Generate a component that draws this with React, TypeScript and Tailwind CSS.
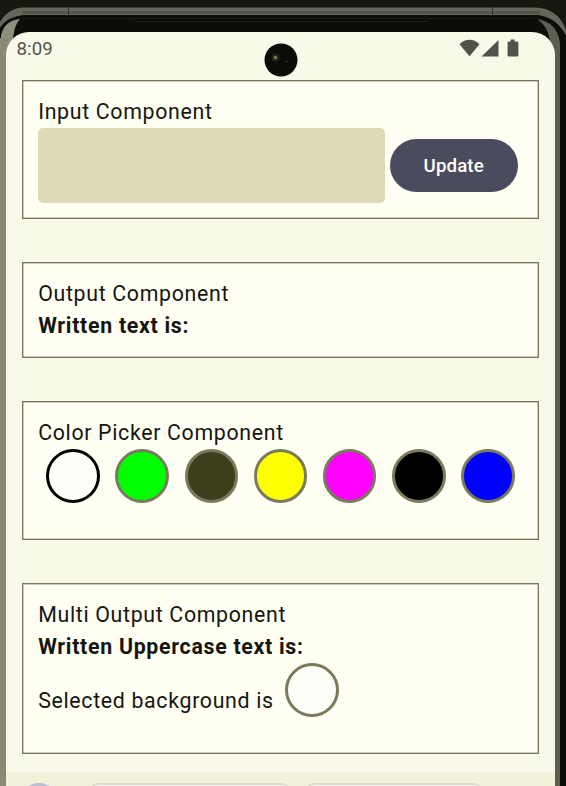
import { useState } from 'react';
import type { ReactNode } from 'react';
import clsx from 'clsx';

const COLORS = [
  { name: 'White', fill: 'bg-[#fffffa]' },
  { name: 'Green', fill: 'bg-[#00ff00]' },
  { name: 'Dark gray', fill: 'bg-[#3e3e1c]' },
  { name: 'Yellow', fill: 'bg-[#ffff00]' },
  { name: 'Magenta', fill: 'bg-[#ff00ff]' },
  { name: 'Black', fill: 'bg-black' },
  { name: 'Blue', fill: 'bg-[#0000ff]' },
];

export default function App() {
  const [text, setText] = useState('');
  const [written, setWritten] = useState('');
  const [selected, setSelected] = useState(0);

  return (
    <div className="relative h-[786px] w-[566px] overflow-hidden bg-[#10100c] pl-[6px] pr-[11px] pt-[32.4px] font-['Roboto',sans-serif] text-[#15150f]">
      <PhoneFrame />
      <div className="relative flex h-full flex-col overflow-hidden rounded-t-[23px] bg-[#f9f9e9]">
        <StatusBar />

        <main className="flex flex-col px-4">
          <Panel className="h-[139px]">
            <Label>Input Component</Label>
            <div className="flex items-center gap-[5.5px]">
              <input
                value={text}
                onChange={(e) => setText(e.target.value)}
                className="h-[75px] w-[346.5px] rounded-[5px] bg-[#dddbb8] px-5 text-[21.33px] outline-none"
              />
              <button
                type="button"
                onClick={() => setWritten(text)}
                className="h-[53.5px] w-[128px] rounded-full bg-[#4a4b5e] pr-px text-[18.67px] font-medium tracking-[0.13px] text-[#fffff5]"
              >
                Update
              </button>
            </div>
          </Panel>

          <Panel className="mt-[43px] h-[96px]">
            <Label>Output Component</Label>
            <Label bold>Written text is: {written}</Label>
          </Panel>

          <Panel className="mt-[43px] h-[139px]">
            <Label>Color Picker Component</Label>
            <div className="flex gap-[15.7px] pl-2">
              {COLORS.map((color, i) => (
                <button
                  key={color.name}
                  type="button"
                  aria-label={color.name}
                  onClick={() => setSelected(i)}
                  className={clsx(
                    'h-[53.5px] w-[53.5px] shrink-0 rounded-full border-3',
                    i === selected ? 'border-black' : 'border-[#7a7a5c]',
                    color.fill
                  )}
                />
              ))}
            </div>
          </Panel>

          <Panel className="mt-[43px] h-[171px]">
            <Label>Multi Output Component</Label>
            <Label bold>Written Uppercase text is: {written.toUpperCase()}</Label>
            <div className="flex items-end gap-[11.5px]">
              <Label>Selected background is</Label>
              <span
                className={clsx(
                  'h-[53.5px] w-[53.5px] rounded-full border-3 border-[#7a7a5c]',
                  COLORS[selected].fill
                )}
              />
            </div>
          </Panel>
        </main>

        <KeyboardTop />
      </div>
    </div>
  );
}

function Panel({ className, children }: { className?: string; children: ReactNode }) {
  return (
    <section
      className={clsx(
        'shrink-0 border border-[#77775f] bg-[#fffff4] pl-[15.2px] pt-[14.8px] shadow-[inset_0_0_0_0.5px_#99998a]',
        className
      )}
    >
      {children}
    </section>
  );
}

function Label({ bold, children }: { bold?: boolean; children: ReactNode }) {
  return (
    <p
      className={clsx(
        'whitespace-nowrap text-[21.33px] leading-8',
        bold ? 'font-bold tracking-[0.7px]' : 'tracking-[0.67px]'
      )}
    >
      {children}
    </p>
  );
}

function StatusBar() {
  return (
    <div className="flex h-[48px] shrink-0 items-start justify-between pl-[10.5px] pr-[36.5px] text-[#55554c]">
      <span className="mt-[4px] text-[18.67px] leading-[26px] tracking-[0.1px]">8:09</span>
      {/* camera cutout */}
      <svg
        className="absolute left-[257.5px] top-[10.5px]"
        width="34"
        height="34"
        viewBox="0 0 34 34"
      >
        <circle cx="17" cy="17" r="16.5" fill="#0c0c08" />
        <circle cx="11.5" cy="14.5" r="4" fill="#30321c" opacity="0.6" />
        <circle cx="11.5" cy="14.5" r="1.8" fill="#72824e" />
        <circle cx="22.5" cy="18.5" r="1" fill="#264a42" />
      </svg>
      <svg
        className="mt-[7px]"
        width="60"
        height="18"
        viewBox="0 0 60 18"
        fill="#52524c"
      >
        <path d="M0.5 5.2C6.3-.7 14.7-.7 20.5 5.2L10.5 17.2Z" />
        <path d="M39.5 1V17.5H22.5Z" />
        <path d="M51.5.5h4v2h2.7a1.2 1.2 0 0 1 1.2 1.2v12.6a1.2 1.2 0 0 1-1.2 1.2h-8.4a1.2 1.2 0 0 1-1.2-1.2V3.7a1.2 1.2 0 0 1 1.2-1.2h1.7Z" />
      </svg>
    </div>
  );
}

// Top edge of the on-screen keyboard, the rest is cut off by the viewport
function KeyboardTop() {
  return (
    <div className="mt-auto flex h-[14px] shrink-0 items-start overflow-hidden bg-[#f2f1da] pl-[14px] pt-[10.5px]">
      <span className="h-[38px] w-[38px] shrink-0 rounded-full bg-[#bcbdd0]" />
      <span className="ml-[32px] h-10 w-[200px] shrink-0 rounded-lg border-2 border-[#dddccb] bg-[#f8f8ee]" />
      <span className="ml-[16px] h-10 w-[176px] shrink-0 rounded-lg border-2 border-[#dddccb] bg-[#f8f8ee]" />
    </div>
  );
}

function PhoneFrame() {
  return (
    <svg
      className="absolute inset-0"
      width="566"
      height="786"
      viewBox="0 0 566 786"
      fill="none"
    >
      <rect width="566" height="786" fill="#17170e" />
      <path d="M0 28V22Q8 8 24 7.5H535Q558 8 566 30V36Q556 16 535 15H25Q8 16 0 28Z" fill="#66665a" />
      <path d="M0 28Q8 16 25 15H535Q556 16 566 36V786H0Z" fill="#0c0c08" />
      <path d="M1 786V35Q5 20 20 19Q13 26 13 44V786Z" fill="#8e8e7c" />
      <rect y="38" width="7" height="748" fill="#8a8a74" />
      <path d="M537 19Q557 22 560 43V786H550V45Q550 28 537 19Z" fill="#5e5e50" />
      <path d="M22 12.5H540" stroke="#55554a" strokeWidth="3" />
      <path d="M68.5 8V15M492.5 7V15" stroke="#303028" />
      <path d="M22 18.5H535" stroke="#1c1c14" />
      <path d="M134 21.5H427" stroke="#1e1e16" />
    </svg>
  );
}
